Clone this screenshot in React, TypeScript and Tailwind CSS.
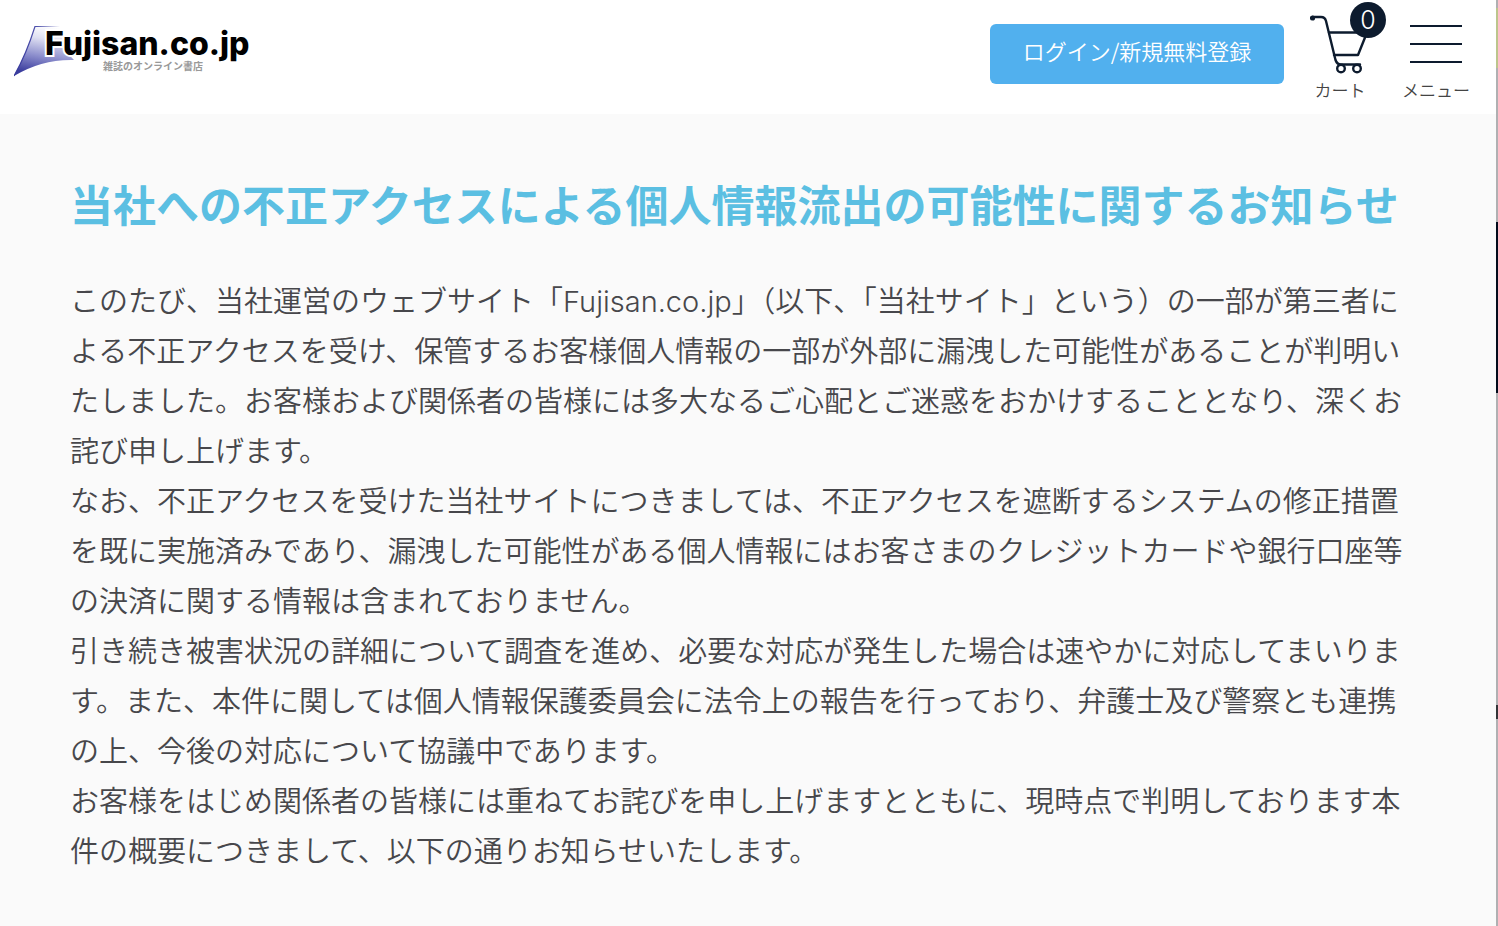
/** Body copy, one array per paragraph and one string per line. */
const paragraphs: string[][] = [
    [
        'このたび、当社運営のウェブサイト「Fujisan.co.jp」（以下、「当社サイト」という）の一部が第三者に',
        'よる不正アクセスを受け、保管するお客様個人情報の一部が外部に漏洩した可能性があることが判明い',
        'たしました。お客様および関係者の皆様には多大なるご心配とご迷惑をおかけすることとなり、深くお',
        '詫び申し上げます。',
    ],
    [
        'なお、不正アクセスを受けた当社サイトにつきましては、不正アクセスを遮断するシステムの修正措置',
        'を既に実施済みであり、漏洩した可能性がある個人情報にはお客さまのクレジットカードや銀行口座等',
        'の決済に関する情報は含まれておりません。',
    ],
    [
        '引き続き被害状況の詳細について調査を進め、必要な対応が発生した場合は速やかに対応してまいりま',
        'す。また、本件に関しては個人情報保護委員会に法令上の報告を行っており、弁護士及び警察とも連携',
        'の上、今後の対応について協議中であります。',
    ],
    [
        'お客様をはじめ関係者の皆様には重ねてお詫びを申し上げますとともに、現時点で判明しております本',
        '件の概要につきまして、以下の通りお知らせいたします。',
    ],
];

const Logo = () => (
    <a href="/" className="block shrink-0">
        <svg width="250" height="56" viewBox="0 0 250 56">
            <defs>
                <linearGradient id="slope" x1="0.55" y1="0" x2="0.35" y2="1">
                    <stop offset="0" stopColor="#fff" />
                    <stop offset="0.25" stopColor="#dfe0f2" />
                    <stop offset="0.6" stopColor="#8d8fcd" />
                    <stop offset="0.95" stopColor="#3b3d9e" />
                </linearGradient>
                <linearGradient id="ridge" x1="0" y1="0" x2="1" y2="0">
                    <stop offset="0" stopColor="#34369a" />
                    <stop offset="0.5" stopColor="#4f52ac" />
                    <stop offset="1" stopColor="#fff" />
                </linearGradient>
            </defs>
            <path d="M21 2H46Q48 25 60 36Q28 35 0 52Q12 31 21 2Z" fill="url(#slope)" />
            <path d="M46 2.5H21Q12 31 0 52" fill="none" stroke="url(#ridge)" strokeWidth="1.2" />
            <text x="31" y="31" fontSize="32" className="font-['Inter'] font-extrabold" stroke="#fff" strokeWidth="4" paintOrder="stroke">Fujisan.co.jp</text>
            <text x="89" y="46" fontSize="10" fill="#999" className="font-['Noto_Sans_CJK_JP'] font-bold">雑誌のオンライン書店</text>
        </svg>
    </a>
);

const CartIcon = () => (
    <svg width="60" height="60" viewBox="0 0 60 60" fill="none" stroke="#0d1b2e" strokeWidth="2.4" strokeLinecap="round" strokeLinejoin="round">
        <circle cx="2.5" cy="4" r="1.4" fill="#0d1b2e" />
        <path d="M2.5 3H11Q15 3 16 7L25.5 46Q27 50.5 31 50.5H50" />
        <path d="M19 18.5H57L48 41H24" />
        <circle cx="31" cy="54.5" r="3.8" fill="#fff" />
        <circle cx="47" cy="54.5" r="3.8" fill="#fff" />
    </svg>
);

const Header = () => (
    <header className="flex h-[114px] items-start justify-between bg-white pl-[14px] pr-6">
        <div className="pt-6">
            <Logo />
        </div>
        <nav className="flex items-start">
            <button type="button" className="mt-6 h-[60px] w-[294px] cursor-pointer rounded-md bg-[#51b0ee] pb-2 text-[22px] font-[350] text-white">
                ログイン/新規無料登録
            </button>
            <a href="/cart" className="relative ml-5 flex w-[72px] flex-col items-center pt-[14px] text-[17px] leading-6 text-[#444]">
                <CartIcon />
                <span className="mt-1 font-[350]">カート</span>
                <span className="absolute right-[-10px] top-[2px] flex size-9 items-center justify-center rounded-full bg-[#0d1b2e] font-['Inter',sans-serif] text-[25px] font-light text-white">
                    0
                </span>
            </a>
            <button type="button" className="ml-6 flex w-[72px] cursor-pointer flex-col items-center pt-[25px] text-[17px] leading-6 text-[#444]">
                <span className="flex w-[52px] flex-col gap-4">
                    <span className="h-[2px] bg-[#0d1b2e]" />
                    <span className="h-[2px] bg-[#0d1b2e]" />
                    <span className="h-[2px] bg-[#0d1b2e]" />
                </span>
                <span className="mt-[15px] font-[350]">メニュー</span>
            </button>
        </nav>
    </header>
);

/** Narrow strip of the neighbouring window along the right edge. */
const EdgeStrip = () => (
    <div className="flex w-[2px] shrink-0 flex-col bg-[#b0b0b2]" aria-hidden="true">
        <div className="h-[8px]" />
        <div className="h-[60px] bg-[#bcc58c]" />
        <div className="h-[154px]" />
        <div className="h-[171px] bg-[#020b1c]" />
        <div className="h-[312px]" />
        <div className="h-[14px] bg-[#333538]" />
    </div>
);

const App = () => (
    <div className="flex min-h-screen overflow-hidden bg-[#fafafa] font-['Noto_Sans_CJK_JP',sans-serif]" lang="ja">
        <div className="min-w-0 flex-1">
            <Header />
            <main className="pb-12 pl-[70px] pr-12 pt-[61px]">
                <h1 className="whitespace-nowrap text-[43px] font-bold leading-[56px] text-[#5bbfe2]">
                    当社への不正アクセスによる個人情報流出の可能性に関するお知らせ
                </h1>
                <div className="mt-[46px] font-['Inter','Noto_Sans_CJK_JP',sans-serif] text-[29px] font-[350] leading-[50px] text-[#47474b]">
                    {paragraphs.map((lines) => (
                        <p key={lines[0]}>
                            {lines.map((line) => (
                                <span key={line} className="block whitespace-nowrap">{line}</span>
                            ))}
                        </p>
                    ))}
                </div>
            </main>
        </div>
        <EdgeStrip />
    </div>
);

export default App;
